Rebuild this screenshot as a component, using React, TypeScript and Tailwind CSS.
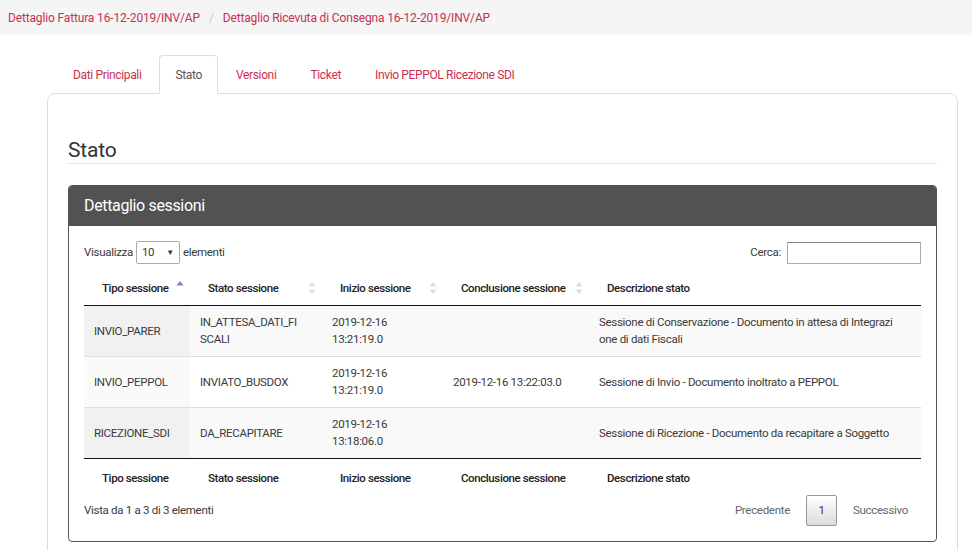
import React from "react";

const LINK = "text-[#c9304f]";

function SortBoth() {
  return (
    <svg width="8" height="14" viewBox="0 0 8 14" className="absolute right-[6px] top-1/2 -translate-y-1/2">
      <path d="M0.5 5.5 L4 1 L7.5 5.5 Z" fill="#dcdcdc" />
      <path d="M0.5 8.5 L4 13 L7.5 8.5 Z" fill="#dcdcdc" />
    </svg>
  );
}
function SortAsc() {
  return (
    <svg width="8" height="14" viewBox="0 0 8 14" className="absolute right-[6px] top-[9px]">
      <path d="M0.5 5.5 L4 1 L7.5 5.5 Z" fill="#7f7fe0" />
    </svg>
  );
}

const rows = [
  {
    tipo: "INVIO_PARER",
    stato: ["IN_ATTESA_DATI_FI", "SCALI"],
    inizio: ["2019-12-16", "13:21:19.0"],
    concl: "",
    desc: ["Sessione di Conservazione - Documento in attesa di Integrazi", "one di dati Fiscali"],
  },
  {
    tipo: "INVIO_PEPPOL",
    stato: ["INVIATO_BUSDOX"],
    inizio: ["2019-12-16", "13:21:19.0"],
    concl: "2019-12-16 13:22:03.0",
    desc: ["Sessione di Invio - Documento inoltrato a PEPPOL"],
  },
  {
    tipo: "RICEZIONE_SDI",
    stato: ["DA_RECAPITARE"],
    inizio: ["2019-12-16", "13:18:06.0"],
    concl: "",
    desc: ["Sessione di Ricezione - Documento da recapitare a Soggetto"],
  },
];

function Lines({ l }: { l: string[] }) {
  return (
    <>
      {l.map((t, i) => (
        <React.Fragment key={i}>
          {i > 0 && <br />}
          {t}
        </React.Fragment>
      ))}
    </>
  );
}

export default function App() {
  const headers = ["Tipo sessione", "Stato sessione", "Inizio sessione", "Conclusione sessione", "Descrizione stato"];
  const td = "py-[8px] px-[10px] leading-[17px] whitespace-nowrap overflow-hidden";
  return (
    <div className="w-[972px] h-[550px] overflow-hidden bg-white text-[#3a3a3a] font-['Roboto',sans-serif] text-[11.5px] tracking-[-0.3px]">
      {/* breadcrumb */}
      <div className="h-[35px] bg-[#f5f5f5] flex items-center pl-[8px] text-[12px] tracking-[-0.15px]">
        <span className={LINK}>Dettaglio Fattura 16-12-2019/INV/AP</span>
        <span className="text-[#ccc] px-[9px]">/</span>
        <span className={LINK}>Dettaglio Ricevuta di Consegna 16-12-2019/INV/AP</span>
      </div>

      <div className="pl-[47px] pr-[14px] pt-[20px]">
        {/* tabs */}
        <div className="relative z-10 flex gap-[2px] pl-[10px] text-[12px] tracking-[-0.35px] h-[39px] -mb-px">
          {["Dati Principali", "Stato", "Versioni", "Ticket", "Invio PEPPOL Ricezione SDI"].map((t) =>
            t === "Stato" ? (
              <div key={t} className="px-[15px] flex items-center border border-[#ddd] border-b-white bg-white rounded-t-[4px] text-[#555]">
                {t}
              </div>
            ) : (
              <div key={t} className={`px-[16px] flex items-center ${LINK}`}>
                {t}
              </div>
            )
          )}
        </div>

        {/* panel */}
        <div className="border border-[#ddd] rounded-[8px] h-[500px] px-[20px] pt-[45px]">
          <h2 className="text-[21px] leading-[22px] tracking-[-0.2px] text-[#333] pb-[2px] border-b border-[#e5e5e5]">Stato</h2>

          <div className="mt-[21px] border border-[#555] rounded-[4px] overflow-hidden">
            <div className="h-[40px] bg-[#525252] text-white text-[16px] tracking-[-0.35px] flex items-center pl-[15px]">Dettaglio sessioni</div>
            <div className="px-[15px] pt-[15px] pb-[15px]">
              <div className="flex items-center justify-between h-[23px]">
                <div className="flex items-center gap-[3px]">
                  <span>Visualizza</span>
                  <div className="w-[44px] h-[23px] border border-[#aaa] rounded-[2px] flex items-center justify-between px-[5px]">
                    <span>10</span>
                    <span className="text-[8px]">▼</span>
                  </div>
                  <span>elementi</span>
                </div>
                <div className="flex items-center gap-[6px]">
                  <span>Cerca:</span>
                  <div className="w-[134px] h-[22px] border border-[#aaa] border-t-[#888]" />
                </div>
              </div>

              <table className="w-full table-fixed border-collapse mt-[7px]">
                <colgroup>
                  <col className="w-[106px]" />
                  <col className="w-[132px]" />
                  <col className="w-[121px]" />
                  <col className="w-[146px]" />
                  <col />
                </colgroup>
                <thead>
                  <tr className="border-b border-[#111]">
                    {headers.map((h, i) => (
                      <th key={h} className="relative text-left font-medium py-[10px] px-[18px] leading-[14px] whitespace-nowrap text-[#222] tracking-[-0.4px]">
                        {h}
                        {i === 0 ? <SortAsc /> : i < 4 ? <SortBoth /> : null}
                      </th>
                    ))}
                  </tr>
                </thead>
                <tbody>
                  {rows.map((r, i) => {
                    const odd = i % 2 === 0;
                    return (
                      <tr key={r.tipo} className={`${i > 0 ? "border-t border-[#ddd]" : ""} ${odd ? "bg-[#f9f9f9]" : "bg-white"} align-middle`}>
                        <td className={`${td} ${odd ? "bg-[#f1f1f1]" : "bg-[#fafafa]"}`}>{r.tipo}</td>
                        <td className={td}><Lines l={r.stato} /></td>
                        <td className={td}><Lines l={r.inizio} /></td>
                        <td className={td}>{r.concl}</td>
                        <td className={td}><Lines l={r.desc} /></td>
                      </tr>
                    );
                  })}
                </tbody>
                <tfoot>
                  <tr className="border-t border-[#111]">
                    {headers.map((h) => (
                      <th key={h} className="text-left font-medium pt-[12px] pb-[6px] px-[18px] leading-[14px] whitespace-nowrap text-[#222] tracking-[-0.4px]">{h}</th>
                    ))}
                  </tr>
                </tfoot>
              </table>

              <div className="flex items-center justify-between mt-[4px]">
                <span>Vista da 1 a 3 di 3 elementi</span>
                <div className="flex items-center pr-[13px]">
                  <span className="text-[#666] pr-[16px]">Precedente</span>
                  <div className="w-[31px] h-[31px] border border-[#979797] rounded-[2px] bg-gradient-to-b from-white to-[#dcdcdc] flex items-center justify-center text-[#333]">1</div>
                  <span className="text-[#666] pl-[16px]">Successivo</span>
                </div>
              </div>
            </div>
          </div>
        </div>
      </div>
    </div>
  );
}
